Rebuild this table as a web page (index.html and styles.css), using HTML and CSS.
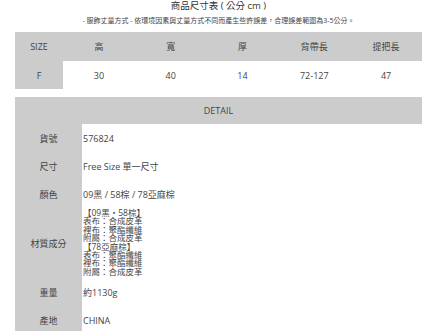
FILE: index.html
```html
<!DOCTYPE html>
<html lang="zh-Hant">
<head>
<meta charset="utf-8">
<link rel="stylesheet" href="styles.css">
</head>
<body>
<div class="page">
  <h1 class="title">商品尺寸表 ( 公分 cm )</h1>
  <p class="note">- 服飾丈量方式 - 依環境因素與丈量方式不同而產生些許誤差，合理誤差範圍為3-5公分。</p>

  <table class="size-table">
    <colgroup><col class="c-first"><col><col><col><col><col></colgroup>
    <tr class="head">
      <th>SIZE</th><th>高</th><th>寬</th><th>厚</th><th>背帶長</th><th>提把長</th>
    </tr>
    <tr class="row">
      <th>F</th><td>30</td><td>40</td><td>14</td><td>72-127</td><td>47</td>
    </tr>
  </table>

  <table class="detail-table">
    <colgroup><col class="c-label"><col></colgroup>
    <tr class="head"><th colspan="2">DETAIL</th></tr>
    <tr class="row"><th>貨號</th><td>576824</td></tr>
    <tr class="row"><th>尺寸</th><td>Free Size 單一尺寸</td></tr>
    <tr class="row"><th>顏色</th><td>09黑 / 58棕 / 78亞麻棕</td></tr>
    <tr class="row-mat"><th>材質成分</th><td><div class="mat">【09黑・58棕】<br>表布：合成皮革<br>裡布：聚酯纖維<br>附屬：合成皮革<br>【78亞麻棕】<br>表布：聚酯纖維<br>裡布：聚酯纖維<br>附屬：合成皮革</div></td></tr>
    <tr class="row"><th>重量</th><td>約1130g</td></tr>
    <tr class="row"><th>產地</th><td>CHINA</td></tr>
  </table>
</div>
</body>
</html>
```

FILE: styles.css
```css
html, body {
  margin: 0;
  padding: 0;
  background: #ffffff;
}
body {
  font-family: "Open Sans", "Noto Sans CJK TC", sans-serif;
  color: #444444;
}
.page {
  padding: 0 8px 0 15px;
}
.title {
  margin: 0;
  font-size: 9.5px;
  font-weight: 400;
  line-height: 12px;
  text-align: center;
  color: #333333;
}
.note {
  margin: 4px 0 0;
  font-size: 7px;
  line-height: 9px;
  text-align: center;
  color: #444444;
}
table {
  width: 407px;
  border-collapse: collapse;
  border-spacing: 0;
  table-layout: fixed;
}
th, td {
  padding: 0;
  font-size: 9px;
  font-weight: 400;
  color: #444444;
}
.size-table {
  margin-top: 7px;
}
.size-table .c-first {
  width: 48px;
}
.size-table .head {
  height: 29px;
  background: #cccccc;
}
.size-table .row {
  height: 28px;
}
.size-table th,
.size-table td {
  text-align: center;
}
.size-table .row th {
  background: #cccccc;
}
.detail-table {
  margin-top: 8px;
}
.detail-table .c-label {
  width: 67px;
}
.detail-table .head {
  height: 27px;
  background: #cccccc;
}
.detail-table .head th {
  text-align: center;
}
.detail-table .row {
  height: 28px;
}
.detail-table .row-mat {
  height: 70px;
}
.detail-table th {
  background: #cccccc;
  text-align: center;
}
.detail-table td {
  text-align: left;
  padding-left: 1px;
}
.mat {
  font-size: 8.5px;
  line-height: 8.4px;
  padding: 1px 0 2px;
}
```
